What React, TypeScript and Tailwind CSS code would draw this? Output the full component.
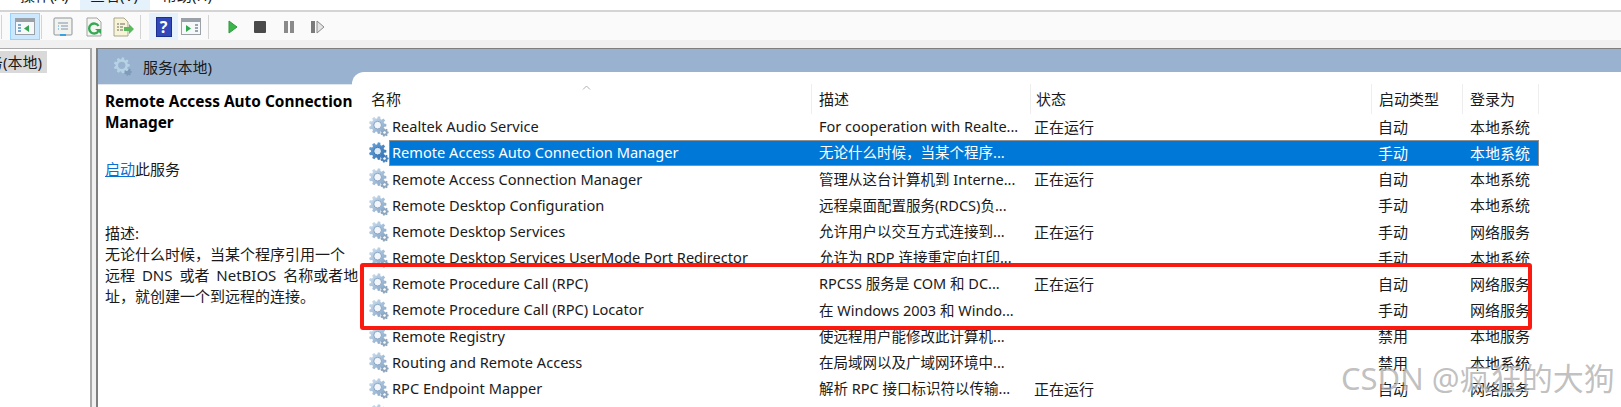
import React from 'react';

const FONT = '"Noto Sans", "Noto Sans CJK SC", sans-serif';

const rows = [
  { name: 'Realtek Audio Service', desc: 'For cooperation with Realte...', status: '正在运行', start: '自动', logon: '本地系统' },
  { name: 'Remote Access Auto Connection Manager', desc: '无论什么时候，当某个程序...', status: '', start: '手动', logon: '本地系统', selected: true },
  { name: 'Remote Access Connection Manager', desc: '管理从这台计算机到 Interne...', status: '正在运行', start: '自动', logon: '本地系统' },
  { name: 'Remote Desktop Configuration', desc: '远程桌面配置服务(RDCS)负...', status: '', start: '手动', logon: '本地系统' },
  { name: 'Remote Desktop Services', desc: '允许用户以交互方式连接到...', status: '正在运行', start: '手动', logon: '网络服务' },
  { name: 'Remote Desktop Services UserMode Port Redirector', desc: '允许为 RDP 连接重定向打印...', status: '', start: '手动', logon: '本地系统' },
  { name: 'Remote Procedure Call (RPC)', desc: 'RPCSS 服务是 COM 和 DC...', status: '正在运行', start: '自动', logon: '网络服务' },
  { name: 'Remote Procedure Call (RPC) Locator', desc: '在 Windows 2003 和 Windo...', status: '', start: '手动', logon: '网络服务' },
  { name: 'Remote Registry', desc: '使远程用户能修改此计算机...', status: '', start: '禁用', logon: '本地服务' },
  { name: 'Routing and Remote Access', desc: '在局域网以及广域网环境中...', status: '', start: '禁用', logon: '本地系统' },
  { name: 'RPC Endpoint Mapper', desc: '解析 RPC 接口标识符以传输...', status: '正在运行', start: '自动', logon: '网络服务' },
  { name: '', desc: '', status: '', start: '', logon: '' },
];

const gearPath = (cx: number, cy: number, r: number, teeth: number) => {
  const pts: string[] = [];
  const step = (Math.PI * 2) / teeth;
  for (let i = 0; i < teeth; i++) {
    const a = i * step;
    const offs = [[-0.3, 0.76], [-0.17, 1], [0.17, 1], [0.3, 0.76]];
    offs.forEach(([o, k]) => {
      const x = cx + Math.cos(a + o * step * 1.2) * r * k;
      const y = cy + Math.sin(a + o * step * 1.2) * r * k;
      pts.push(`${x.toFixed(2)} ${y.toFixed(2)}`);
    });
  }
  return `M${pts.join('L')}Z`;
};

const GearIcon = ({ dark, id }: { dark?: boolean; id: string }) => (
  <svg width="22" height="22" viewBox="0 0 24 24" className="-mr-px shrink-0">
    <defs>
      <linearGradient id={id} x1="0" y1="0" x2="1" y2="1">
        <stop offset="0" stopColor={dark ? '#6fa8dc' : '#d3e3f1'} />
        <stop offset="1" stopColor={dark ? '#2b6cb0' : '#7d9fc4'} />
      </linearGradient>
    </defs>
    <path d={gearPath(18, 18, 4.6, 7)} fill={dark ? '#4a83bd' : '#8ea5bb'} />
    <circle cx="18" cy="18" r="1.4" fill="#fff" />
    <path d={gearPath(10.5, 10, 9.6, 9)} fill={`url(#${id})`} />
    <circle cx="10.5" cy="10" r="4.2" fill={dark ? '#dbeaf7' : '#f3f7fb'} stroke={dark ? '#2f6aa8' : '#7f9dbd'} strokeWidth="1" />
  </svg>
);

const WindowIcon = ({ side, arrow }: { side: 'left' | 'right'; arrow: 'left' | 'right' }) => (
  <svg width="20" height="17" viewBox="0 0 20 17">
    <rect x="0.5" y="0.5" width="19" height="16" fill="#f7f8fa" stroke="#9aa1a8" />
    <rect x="1" y="1" width="18" height="3" fill="#9aa1a8" />
    {side === 'left' ? (
      <path d="M3 7h3M3 10h3M3 13h3" stroke="#5a8fc0" strokeWidth="1.5" />
    ) : (
      <path d="M14 7h3M14 10h3M14 13h3" stroke="#7c8a96" strokeWidth="1.5" />
    )}
    {arrow === 'left' ? <path d="M14 7v7l-5-3.500z" fill="#2fa84f" /> : <path d="M5 7v7l5-3.500z" fill="#2fa84f" />}
  </svg>
);

const ToolSep = () => <div className="h-[24px] w-px bg-[#d4d4d4]" />;

const App = () => {
  return (
    <div className="relative flex h-[407px] w-[1621px] flex-col overflow-hidden bg-white text-[15px] text-[#1a1a1a]" style={{ fontFamily: FONT }}>
      {/* menu bar, cut off by the crop */}
      <div className="flex h-[10px] shrink-0 overflow-hidden bg-white text-[15px] leading-[20px]">
        <div className="ml-[20px] w-[60px] shrink-0 -translate-y-[15px]">操作(A)</div>
        <div className="h-[10px] w-[70px] shrink-0 bg-[#e5f1fb] pl-[10px]"><div className="-translate-y-[15px]">查看(V)</div></div>
        <div className="ml-[12px] -translate-y-[15px]">帮助(H)</div>
      </div>
      <div className="h-[2px] shrink-0 bg-[#d4d4d4]" />

      {/* toolbar */}
      <div className="flex h-[28px] shrink-0 items-center bg-[#fafafa] pl-[1px] pt-px">
        <ToolSep />
        <div className="ml-[8px] flex h-[27px] w-[30px] items-center justify-center border border-[#99d1ff] bg-[#cce8ff]">
          <WindowIcon side="left" arrow="left" />
        </div>
        <div className="ml-px"><ToolSep /></div>
        <svg className="ml-[11px]" width="20" height="20" viewBox="0 0 20 20">
          <rect x="1" y="1" width="18" height="17" rx="1" fill="#f2f2ee" stroke="#8d959c" />
          <path d="M5 6h10M8 9h7M8 12h7" stroke="#7c94ac" />
          <path d="M5 9h1M5 12h1" stroke="#3f9ad6" />
          <rect x="7" y="17" width="6" height="2" fill="#36a3e0" />
        </svg>
        <svg className="ml-[11px]" width="20" height="20" viewBox="0 0 20 20">
          <path d="M3 1h10l4 4v14H3z" fill="#f6f6f2" stroke="#a3a3a3" />
          <path d="M14.500 9a5 5 0 1 0 0 5" fill="none" stroke="#35a853" strokeWidth="2.400" />
          <path d="M11 12h6v5z" fill="#35a853" />
        </svg>
        <svg className="ml-[9px]" width="21" height="20" viewBox="0 0 21 20">
          <path d="M1 1h10l4 4v14H1z" fill="#f8f4d8" stroke="#a8a68c" />
          <path d="M4 7h2M7 7h5M4 10h2M7 10h3M4 13h2M7 13h3" stroke="#6b6b5e" />
          <path d="M11 10h5V7l5 5-5 5v-3h-5z" fill="#5cb85c" />
        </svg>
        <div className="ml-[6px]"><ToolSep /></div>
        <div className="ml-[8px] flex h-[27px] w-[29px] items-center justify-center bg-[#e5f1fb]">
          <div className="flex h-[20px] w-[16px] items-center justify-center border border-[#1c2f8f] bg-[#3048b8] text-[16px] font-bold leading-none text-white">?</div>
        </div>
        <div className="ml-[3px]"><WindowIcon side="right" arrow="right" /></div>
        <div className="ml-[7px]"><ToolSep /></div>
        <svg className="ml-[19px]" width="10" height="14" viewBox="0 0 10 14"><path d="M1 1l8 6-8 6z" fill="#3cb54a" stroke="#2f9a3c" /></svg>
        <div className="ml-[16px] h-[12px] w-[12px] rounded-[1px] bg-[#4a4a4a]" />
        <div className="ml-[18px] flex gap-[2px]">
          <div className="h-[12px] w-[4px] bg-[#8a8a8a]" />
          <div className="h-[12px] w-[4px] bg-[#8a8a8a]" />
        </div>
        <div className="ml-[17px] flex items-center gap-[1px]">
          <div className="h-[12px] w-[4px] bg-[#7a7a7a]" />
          <svg width="9" height="14" viewBox="0 0 9 14"><path d="M1 1l7 6-7 6z" fill="#e4e4e4" stroke="#8a8a8a" /></svg>
        </div>
      </div>
      <div className="h-[8px] shrink-0 bg-[#f0f0f0]" />

      {/* panes */}
      <div className="flex min-h-0 flex-1">
        <div className="w-[92px] shrink-0 border-r-2 border-t border-[#a9a9a9] bg-white pt-[2px]">
          <div className="flex h-[22px] w-[47px] justify-end overflow-hidden whitespace-nowrap bg-[#d9d9d9] pr-[5px] leading-[22px]">
            <span className="shrink-0">务(本地)</span>
          </div>
        </div>
        <div className="w-[4px] shrink-0 bg-[#f0f0f0]" />
        <div className="flex min-w-0 flex-1 flex-col border-l-2 border-t border-[#7f7f7f]">
          <div className="flex h-[35px] shrink-0 items-start bg-[#98b2d0] pl-[15px] pt-[8px]">
            <svg width="20" height="20" viewBox="0 0 24 24">
              <path d={gearPath(18, 18, 4.600, 7)} fill="#7f9bb8" />
              <path d={gearPath(10.500, 10, 9.600, 9)} fill="#b6d3e6" />
              <circle cx="10.500" cy="10" r="4.400" fill="#98b2d0" />
            </svg>
            <span className="ml-[10px] leading-[20px]">服务(本地)</span>
          </div>
          <div className="flex min-h-0 flex-1">
            {/* description pane, its text runs slightly past the list's left edge */}
            <div className="relative z-20 w-[254px] shrink-0 border-t border-[#dfe6ee] pl-[7px] pt-[6px] leading-[21px]">
              <div className="w-[252px] text-[15.4px] font-bold leading-[21px] text-black">
                Remote Access Auto Connection Manager
              </div>
              <div className="mt-[26px]">
                <span className="text-[#0b6fd0] underline">启动</span>此服务
              </div>
              <div className="mt-[43px]">描述:</div>
              <div className="whitespace-nowrap [word-spacing:3px]">
                无论什么时候，当某个程序引用一个
                <br />
                远程 DNS 或者 NetBIOS 名称或者地
                <br />
                址，就创建一个到远程的连接。
              </div>
            </div>
            {/* list pane */}
            <div className="relative z-10 -mt-[12px] min-w-0 flex-1 rounded-tl-[12px] bg-white pr-[82px]">
              <div className="relative flex h-[42px] items-center pt-[12px]">
                <div className="ml-[19px] w-[441px] border-r border-[#eeeeee] leading-[30px]">名称</div>
                <div className="w-[219px] border-r border-[#eeeeee] pl-[7px] leading-[30px]">描述</div>
                <div className="w-[341px] border-r border-[#eeeeee] pl-[5px] leading-[30px]">状态</div>
                <div className="w-[91px] border-r border-[#eeeeee] pl-[7px] leading-[30px]">启动类型</div>
                <div className="w-[76px] border-r border-[#eeeeee] pl-[7px] leading-[30px]">登录为</div>
                <svg className="absolute left-[230px] top-[13px]" width="9" height="5" viewBox="0 0 9 5">
                  <path d="M1 4.500l3.500-3.500 3.500 3.500" fill="none" stroke="#b0b0b0" />
                </svg>
              </div>
              <div className="grid auto-rows-[26.2px]">
                {rows.map((r, i) => (
                  <div key={i} className="flex items-center pl-[16px]">
                    <GearIcon id={`g${i}`} dark={r.selected} />
                    <div
                      className={
                        'flex h-[26px] flex-1 items-center whitespace-nowrap border pl-[2px] ' +
                        (r.selected ? 'border-[#8f8f8f] bg-[#0078d7] text-white' : 'border-transparent')
                      }
                    >
                      <div className="w-[427px] shrink-0 text-[14.6px]">{r.name}</div>
                      <div className="w-[215px] shrink-0 text-[14.5px]">{r.desc}</div>
                      <div className="w-[344px] shrink-0">{r.status}</div>
                      <div className="w-[92px] shrink-0">{r.start}</div>
                      <div className="shrink-0">{r.logon}</div>
                    </div>
                  </div>
                ))}
              </div>
            </div>
          </div>
        </div>
      </div>

      {/* red annotation box */}
      <div className="absolute left-[360px] top-[263px] z-30 h-[67px] w-[1172px] rounded-[3px] border-[4px] border-[#fb1a10]" />
      {/* watermark */}
      <div className="absolute left-[1341px] top-[357px] z-30 whitespace-nowrap text-[31px] leading-[42px] text-[#8c8c8c]/55 [text-shadow:1px_1px_1px_rgba(255,255,255,0.7)]">CSDN @疯狂的大狗</div>
    </div>
  );
};

export default App;
